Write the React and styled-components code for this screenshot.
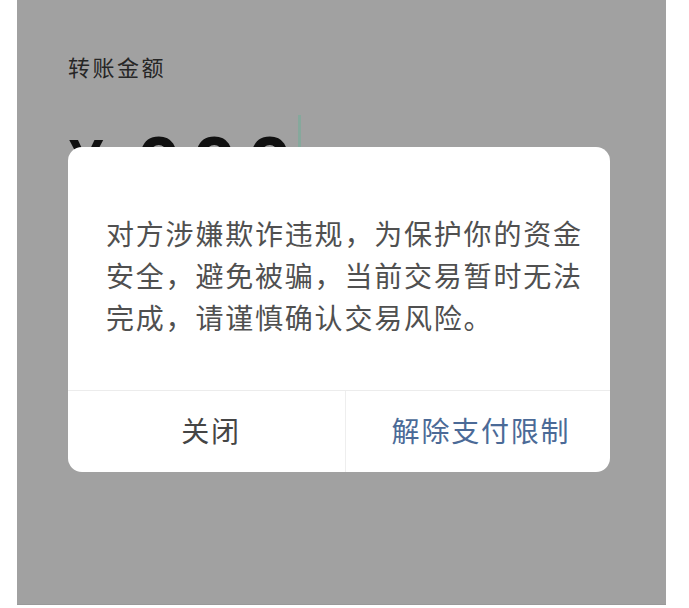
import styled, { createGlobalStyle } from 'styled-components'

const GlobalStyle = createGlobalStyle`
  html, body {
    margin: 0;
    padding: 0;
    background: #ffffff;
  }
  body {
    font-family: "Noto Sans CJK SC", "Noto Sans", sans-serif;
  }
`

const Page = styled.div`
  width: 689px;
  height: 608px;
  overflow: hidden;
  background: #ffffff;
`

const Screen = styled.div`
  position: relative;
  box-sizing: border-box;
  margin-left: 17px;
  width: 649px;
  height: 605px;
  padding: 51px 0 0 51px;
  background: #a1a1a1;
  border-bottom: 1px solid #999999;
`

const Label = styled.div`
  font-size: 22px;
  line-height: 30px;
  letter-spacing: 2.5px;
  color: #262626;
`

const AmountRow = styled.div`
  display: flex;
  align-items: flex-start;
  margin-top: 44px;
  color: #111111;
  font-family: "Liberation Sans", Arial, sans-serif;
  font-weight: 700;
`

const Yen = styled.span`
  font-size: 62px;
  line-height: 1;
  margin-top: 5px;
  margin-left: 1px;
`

const Digits = styled.span`
  font-size: 80px;
  line-height: 1;
  letter-spacing: 11px;
  margin-left: 33px;
`

const Cursor = styled.span`
  width: 3px;
  height: 60px;
  margin-top: -10px;
  margin-left: -5px;
  background: #86a89c;
`

const Dialog = styled.div`
  position: absolute;
  top: 147px;
  left: 51px;
  width: 542px;
  background: #ffffff;
  border-radius: 14px;
  overflow: hidden;
`

const Message = styled.p`
  margin: 0;
  padding: 65px 26px 52px 38px;
  font-size: 28px;
  line-height: 42px;
  letter-spacing: 1.8px;
  color: #505050;
`

const Actions = styled.div`
  display: flex;
  height: 81px;
  border-top: 1px solid #ececec;
`

const Action = styled.button`
  flex: ${(p) => (p.$primary ? '1' : '0 0 277px')};
  display: flex;
  align-items: center;
  justify-content: center;
  padding: 0 0 4px ${(p) => (p.$primary ? '6px' : '9px')};
  border: none;
  border-left: ${(p) => (p.$primary ? '1px solid #eeeeee' : 'none')};
  background: transparent;
  font-family: inherit;
  font-size: 28px;
  letter-spacing: 1.8px;
  color: ${(p) => (p.$primary ? '#4b6a97' : '#454545')};
  cursor: pointer;
`

export default function App() {
  return (
    <Page>
      <GlobalStyle />
      <Screen>
        <Label>转账金额</Label>
        <AmountRow>
          <Yen>¥</Yen>
          <Digits>000</Digits>
          <Cursor />
        </AmountRow>
        <Dialog>
          <Message>
            对方涉嫌欺诈违规，为保护你的资金安全，避免被骗，当前交易暂时无法完成，请谨慎确认交易风险。
          </Message>
          <Actions>
            <Action>关闭</Action>
            <Action $primary>解除支付限制</Action>
          </Actions>
        </Dialog>
      </Screen>
    </Page>
  )
}
